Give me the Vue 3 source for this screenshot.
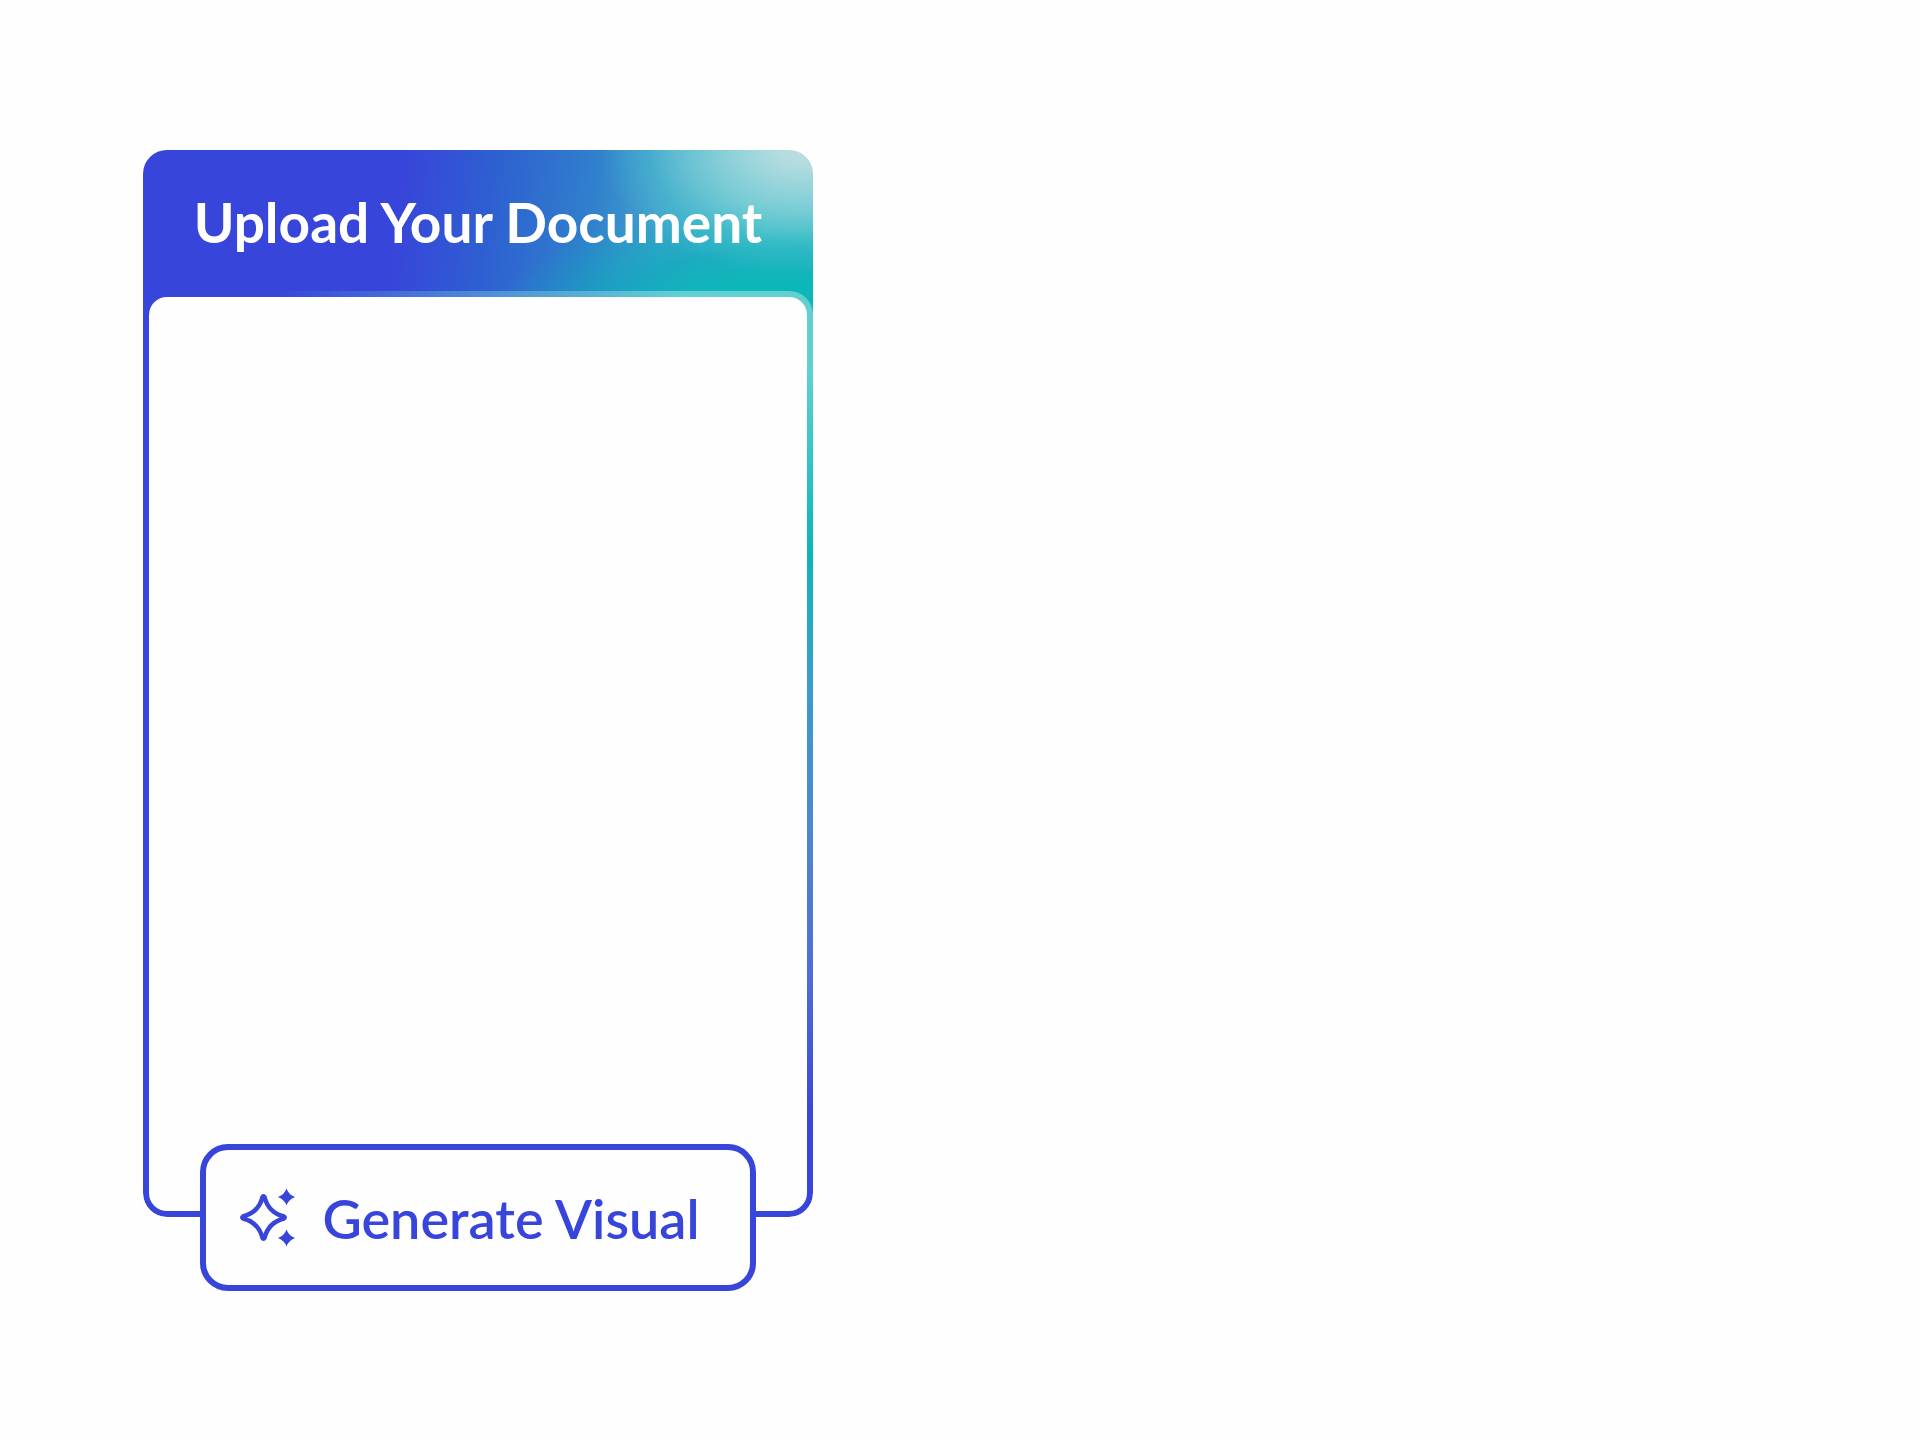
<script setup>
const title = 'Upload Your Document'
const action = 'Generate Visual'
</script>

<template>
  <main class="page">
    <section class="uploader">
      <div class="card">
        <h1 class="title">{{ title }}</h1>
        <div class="panel"></div>
      </div>
      <button class="generate" type="button">
        <svg class="sparkles" viewBox="0 0 56 60" aria-hidden="true">
          <path
            d="M22.500 9 Q23.500 7.500 24.500 9 C27 19 34 26 44 28.500 Q45.500 29.500 44 30.500 C34 33 27 40 24.500 50 Q23.500 51.500 22.500 50 C20 40 13 33 3 30.500 Q1.500 29.500 3 28.500 C13 26 20 19 22.500 9 Z"
            fill="none"
            stroke="currentColor"
            stroke-width="4.500"
            stroke-linejoin="round"
          />
          <path
            d="M46.500 0.500 Q48.500 6.500 55 9 Q48.500 11.500 46.500 17.500 Q44.500 11.500 38 9 Q44.500 6.500 46.500 0.500 Z"
            fill="currentColor"
          />
          <path
            d="M46.500 41.500 Q48.500 47.500 55 50 Q48.500 52.500 46.500 58.500 Q44.500 52.500 38 50 Q44.500 47.500 46.500 41.500 Z"
            fill="currentColor"
          />
        </svg>
        <span class="label">{{ action }}</span>
      </button>
    </section>
  </main>
</template>

<style>
body {
  background: #fefefe;
}
</style>

<style scoped>
.page {
  padding: 150px 143px;
  font-family: Lato, "Open Sans", sans-serif;
}

.uploader {
  display: flex;
  flex-direction: column;
  align-items: center;
  max-width: 670px;
}

.card {
  box-sizing: border-box;
  width: 100%;
  border-radius: 24px;
  overflow: hidden;
  background:
    radial-gradient(200px 125px at 98% 0, #b8dde1 8%, rgba(140, 209, 217, 0.85) 42%, rgba(80, 200, 205, 0.4) 75%, rgba(80, 200, 205, 0) 100%) top / 100% 170px no-repeat,
    radial-gradient(290px 120px at 96% 100%, #0cb7b8 30%, rgba(12, 170, 188, 0.75) 60%, rgba(20, 140, 200, 0) 100%) top / 100% 170px no-repeat,
    linear-gradient(97deg, #3845da 38%, #2e5fd1 51%, #3080cc 66%, #45a4ce 77%, #52c6cc 92%) top / 100% 170px no-repeat;
}

.title {
  margin: 0;
  padding: 32px 16px 29px;
  color: #fff;
  font-size: 55px;
  font-weight: 700;
  line-height: 80px;
  text-align: center;
}

.panel {
  box-sizing: border-box;
  min-height: 926px;
  border: 6px solid transparent;
  border-radius: 24px;
  background:
    linear-gradient(#fefefe, #fefefe) padding-box,
    linear-gradient(to right, #3845da 20%, rgba(56, 69, 218, 0) 80%) border-box,
    linear-gradient(to bottom, #62d0d3 8%, #33c6c4 18%, #0cb5b9 28%, #20abc3 34%, #3a9ccb 43%, #4f84cf 60%, #4f6ad6 75%, #3845da 90%) border-box;
}

.generate {
  display: flex;
  align-items: center;
  justify-content: center;
  gap: 26px;
  box-sizing: border-box;
  width: 83%;
  min-height: 147px;
  margin: -73px 0 0;
  padding: 0 16px 0 0;
  border: 6px solid #3845da;
  border-radius: 28px;
  background: #fefefe;
  color: #3845da;
  font-family: inherit;
  font-size: 54px;
  font-weight: 600;
  line-height: 64px;
  cursor: pointer;
}

.label {
  padding-top: 2px;
}

.sparkles {
  flex: none;
  width: 56px;
  height: 60px;
}
</style>
